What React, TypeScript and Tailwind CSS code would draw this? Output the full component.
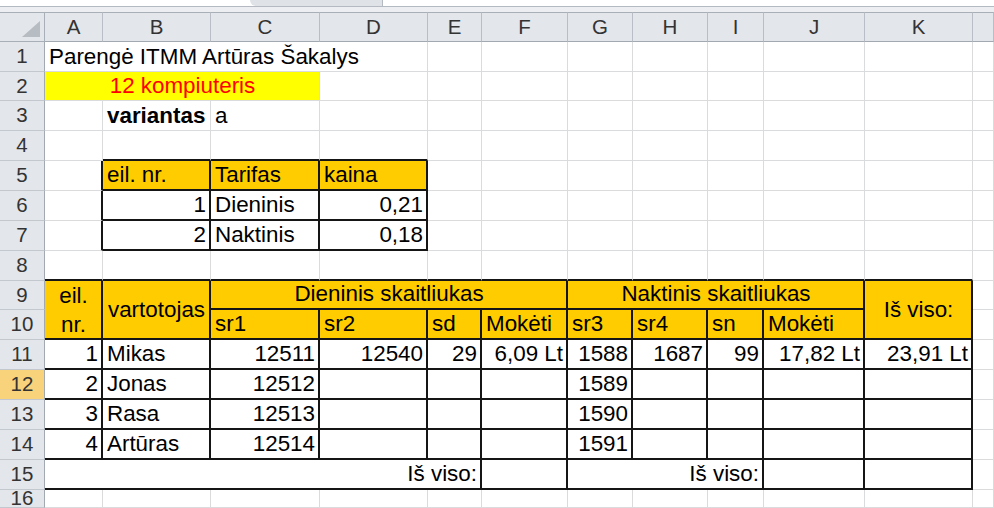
import clsx from 'clsx';

type Cell = {
  t?: string;
  s?: 2 | 3 | 4 | 5;
  rs?: boolean;
  a?: 'r' | 'c';
  y?: boolean;
  kr?: boolean;
  kb?: boolean;
  note?: boolean;
  bold?: boolean;
};

const spans: Record<number, string> = {
  1: '',
  2: 'col-span-2',
  3: 'col-span-3',
  4: 'col-span-4',
  5: 'col-span-5',
};

const blank = (n: number, c: Cell = {}): Cell[] => Array.from({ length: n }, () => ({ ...c }));
const box = (t?: string, a?: 'r'): Cell => ({ t, a, kr: true, kb: true });
const head = (t: string): Cell => ({ t, y: true, kr: true, kb: true });

const rows: Cell[][] = [
  [{ t: 'Parengė ITMM Artūras Šakalys', s: 4 }, ...blank(8)],
  [{ t: '12 kompiuteris', s: 3, a: 'c', note: true }, ...blank(9)],
  [{}, { t: 'variantas', bold: true }, { t: 'a' }, ...blank(9)],
  [{}, ...blank(3, { kb: true }), ...blank(8)],
  [{ kr: true }, head('eil. nr.'), head('Tarifas'), head('kaina'), ...blank(8)],
  [{ kr: true }, box('1', 'r'), box('Dieninis'), box('0,21', 'r'), ...blank(8)],
  [{ kr: true }, box('2', 'r'), box('Naktinis'), box('0,18', 'r'), ...blank(8)],
  [...blank(11, { kb: true }), {}],
  [
    { t: 'eil.|nr.', rs: true, a: 'c', y: true, kr: true, kb: true },
    { t: 'vartotojas', rs: true, a: 'c', y: true, kr: true, kb: true },
    { t: 'Dieninis skaitliukas', s: 4, a: 'c', y: true, kr: true, kb: true },
    { t: 'Naktinis skaitliukas', s: 4, a: 'c', y: true, kr: true, kb: true },
    { t: 'Iš viso:', rs: true, a: 'c', y: true, kr: true, kb: true },
    {},
  ],
  [
    head('sr1'),
    head('sr2'),
    head('sd'),
    head('Mokėti'),
    head('sr3'),
    head('sr4'),
    head('sn'),
    head('Mokėti'),
    {},
  ],
  [
    box('1', 'r'),
    box('Mikas'),
    box('12511', 'r'),
    box('12540', 'r'),
    box('29', 'r'),
    box('6,09 Lt', 'r'),
    box('1588', 'r'),
    box('1687', 'r'),
    box('99', 'r'),
    box('17,82 Lt', 'r'),
    box('23,91 Lt', 'r'),
    {},
  ],
  [box('2', 'r'), box('Jonas'), box('12512', 'r'), box(), box(), box(), box('1589', 'r'), box(), box(), box(), box(), {}],
  [box('3', 'r'), box('Rasa'), box('12513', 'r'), box(), box(), box(), box('1590', 'r'), box(), box(), box(), box(), {}],
  [box('4', 'r'), box('Artūras'), box('12514', 'r'), box(), box(), box(), box('1591', 'r'), box(), box(), box(), box(), {}],
  [
    { t: 'Iš viso:', s: 5, a: 'r', kr: true, kb: true },
    box(),
    { t: 'Iš viso:', s: 3, a: 'r', kr: true, kb: true },
    box(),
    box(),
    {},
  ],
  blank(12),
];

const letters = ['A', 'B', 'C', 'D', 'E', 'F', 'G', 'H', 'I', 'J', 'K', ''];

function SheetCell({ c }: { c: Cell }) {
  const lines = c.t ? c.t.split('|') : [];
  return (
    <div
      className={clsx(
        'flex min-w-0 whitespace-nowrap pl-[4px] pr-[3px] text-[22.4px] leading-[25px]',
        spans[c.s ?? 1],
        c.rs ? 'row-span-2 flex-col items-center justify-center' : 'items-end pb-[2px]',
        !c.rs && c.a === 'r' && 'justify-end',
        !c.rs && c.a === 'c' && 'justify-center',
        c.note ? 'bg-[#ffff00] text-[#ff0000]' : c.y ? 'bg-[#ffcc00] text-black' : 'bg-white text-black',
        c.bold && 'font-bold',
        c.kr ? 'border-r-2 border-r-[#151515]' : 'border-r border-r-[#dadbdc]',
        c.kb ? 'border-b-2 border-b-[#151515]' : 'border-b border-b-[#dadbdc]',
      )}
    >
      {lines.length > 1
        ? lines.map((l) => (
            <span key={l} className="leading-[29px]">
              {l}
            </span>
          ))
        : c.t}
    </div>
  );
}

export default function App() {
  return (
    <div className="w-[994px] h-[508px] overflow-hidden bg-white font-['Liberation_Sans',Arial,sans-serif]">
      {/* formula bar edge */}
      <div className="h-[7px] bg-white border-b border-[#b5bac2] flex">
        <div className="ml-[250px] w-[133px] h-full bg-[#dfe2e6] border-r border-[#b5bac2] rounded-bl-[10px]" />
      </div>
      <div className="h-[5px] bg-[#eceef1]" />

      <div className="grid grid-cols-[45px_58px_108px_109px_108px_54px_86px_65px_75px_56px_101px_108px_1fr] grid-rows-[30px_30px_29px_30px_30px_30px_30px_30px_30px_29px_30px_30px_30px_30px_30px_30px_18px]">
        {/* corner */}
        <div className="flex items-end justify-end p-[4px] bg-[#e3e6ea] border-r border-b border-[#a9afb7] border-t border-t-[#a9afb7]">
          <svg width="18" height="16" viewBox="0 0 18 16">
            <polygon points="18,0 18,16 0,16" fill="#b7bcc2" />
          </svg>
        </div>
        {letters.map((l, i) => (
          <div
            key={i}
            className="flex items-center justify-center bg-[#e3e6ea] border-t border-t-[#a9afb7] border-r border-r-[#b9bec6] border-b border-b-[#a3a9b1] text-[20.5px] text-[#333]"
          >
            {l}
          </div>
        ))}

        {rows.map((row, r) => (
          <div key={r} className="contents">
            <div
              className={clsx(
                'flex items-center justify-center border-r border-r-[#a3a9b1] border-b border-b-[#c3c8ce] text-[20.5px] text-[#333]',
                r === 11 ? 'bg-[#f8d37c]' : 'bg-[#e3e6ea]',
              )}
            >
              {r + 1}
            </div>
            {row.map((c, i) => (
              <SheetCell key={i} c={c} />
            ))}
          </div>
        ))}
      </div>
    </div>
  );
}
